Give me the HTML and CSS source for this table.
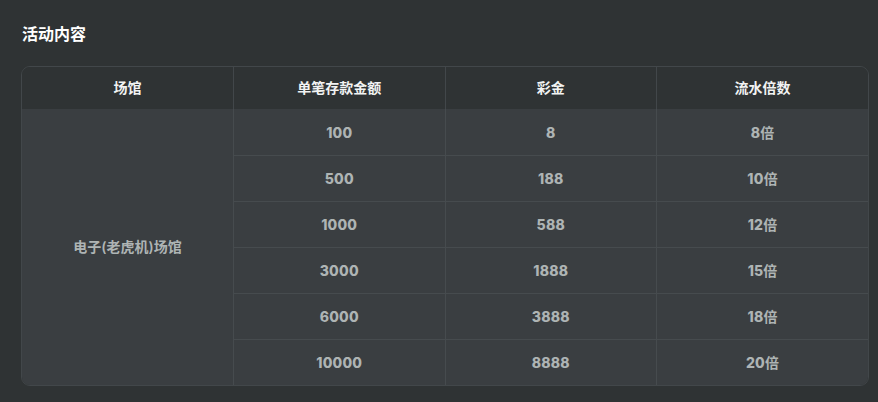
FILE: index.html
```html
<!DOCTYPE html>
<html lang="zh">
<head>
<meta charset="utf-8">
<link rel="stylesheet" href="styles.css">
</head>
<body>
<div class="page">
  <h2 class="title">活动内容</h2>
  <div class="table-wrap">
    <table class="rules">
      <thead>
        <tr><th>场馆</th><th>单笔存款金额</th><th>彩金</th><th>流水倍数</th></tr>
      </thead>
      <tbody>
        <tr><td rowspan="6" class="venue">电子(老虎机)场馆</td><td>100</td><td>8</td><td>8<span class="unit">倍</span></td></tr>
        <tr><td>500</td><td>188</td><td>10<span class="unit">倍</span></td></tr>
        <tr><td>1000</td><td>588</td><td>12<span class="unit">倍</span></td></tr>
        <tr><td>3000</td><td>1888</td><td>15<span class="unit">倍</span></td></tr>
        <tr><td>6000</td><td>3888</td><td>18<span class="unit">倍</span></td></tr>
        <tr class="last"><td>10000</td><td>8888</td><td>20<span class="unit">倍</span></td></tr>
      </tbody>
    </table>
  </div>
</div>
</body>
</html>
```
FILE: styles.css
```css
html, body {
  margin: 0;
  padding: 0;
  background: #2f3334;
}
.page {
  padding: 22px 9px 0 21px;
  font-family: Inter, "Noto Sans CJK SC", sans-serif;
}
.title {
  margin: 0 0 20px 1px;
  font-size: 16px;
  line-height: 24px;
  font-weight: 700;
  color: #ffffff;
}
.table-wrap {
  border: 1px solid #42474a;
  border-radius: 9px;
  overflow: hidden;
}
.rules {
  width: 100%;
  border-collapse: collapse;
  table-layout: fixed;
}
.rules th {
  box-sizing: border-box;
  height: 42px;
  padding: 0 0 1px;
  background: #2f3334;
  color: #f2f3f3;
  font-size: 14px;
  line-height: 20px;
  font-weight: 700;
  text-align: center;
  border-right: 1px solid #42474a;
}
.rules td {
  box-sizing: border-box;
  height: 46px;
  padding: 2px 0 0;
  background: #3a3e41;
  color: #aeb4b4;
  font-size: 14px;
  line-height: 20px;
  font-weight: 800;
  letter-spacing: 0.2px;
  text-align: center;
  border-right: 1px solid #464b4e;
  border-bottom: 1px solid #464b4e;
}
.rules td .unit {
  font-weight: 700;
  letter-spacing: 0;
}
.rules th:last-child,
.rules td:last-child {
  border-right: none;
}
.rules tr.last td {
  border-bottom: none;
  height: 46px;
}
.rules td.venue {
  border-bottom: none;
  font-weight: 600;
  letter-spacing: 0;
  padding: 0;
}
```
